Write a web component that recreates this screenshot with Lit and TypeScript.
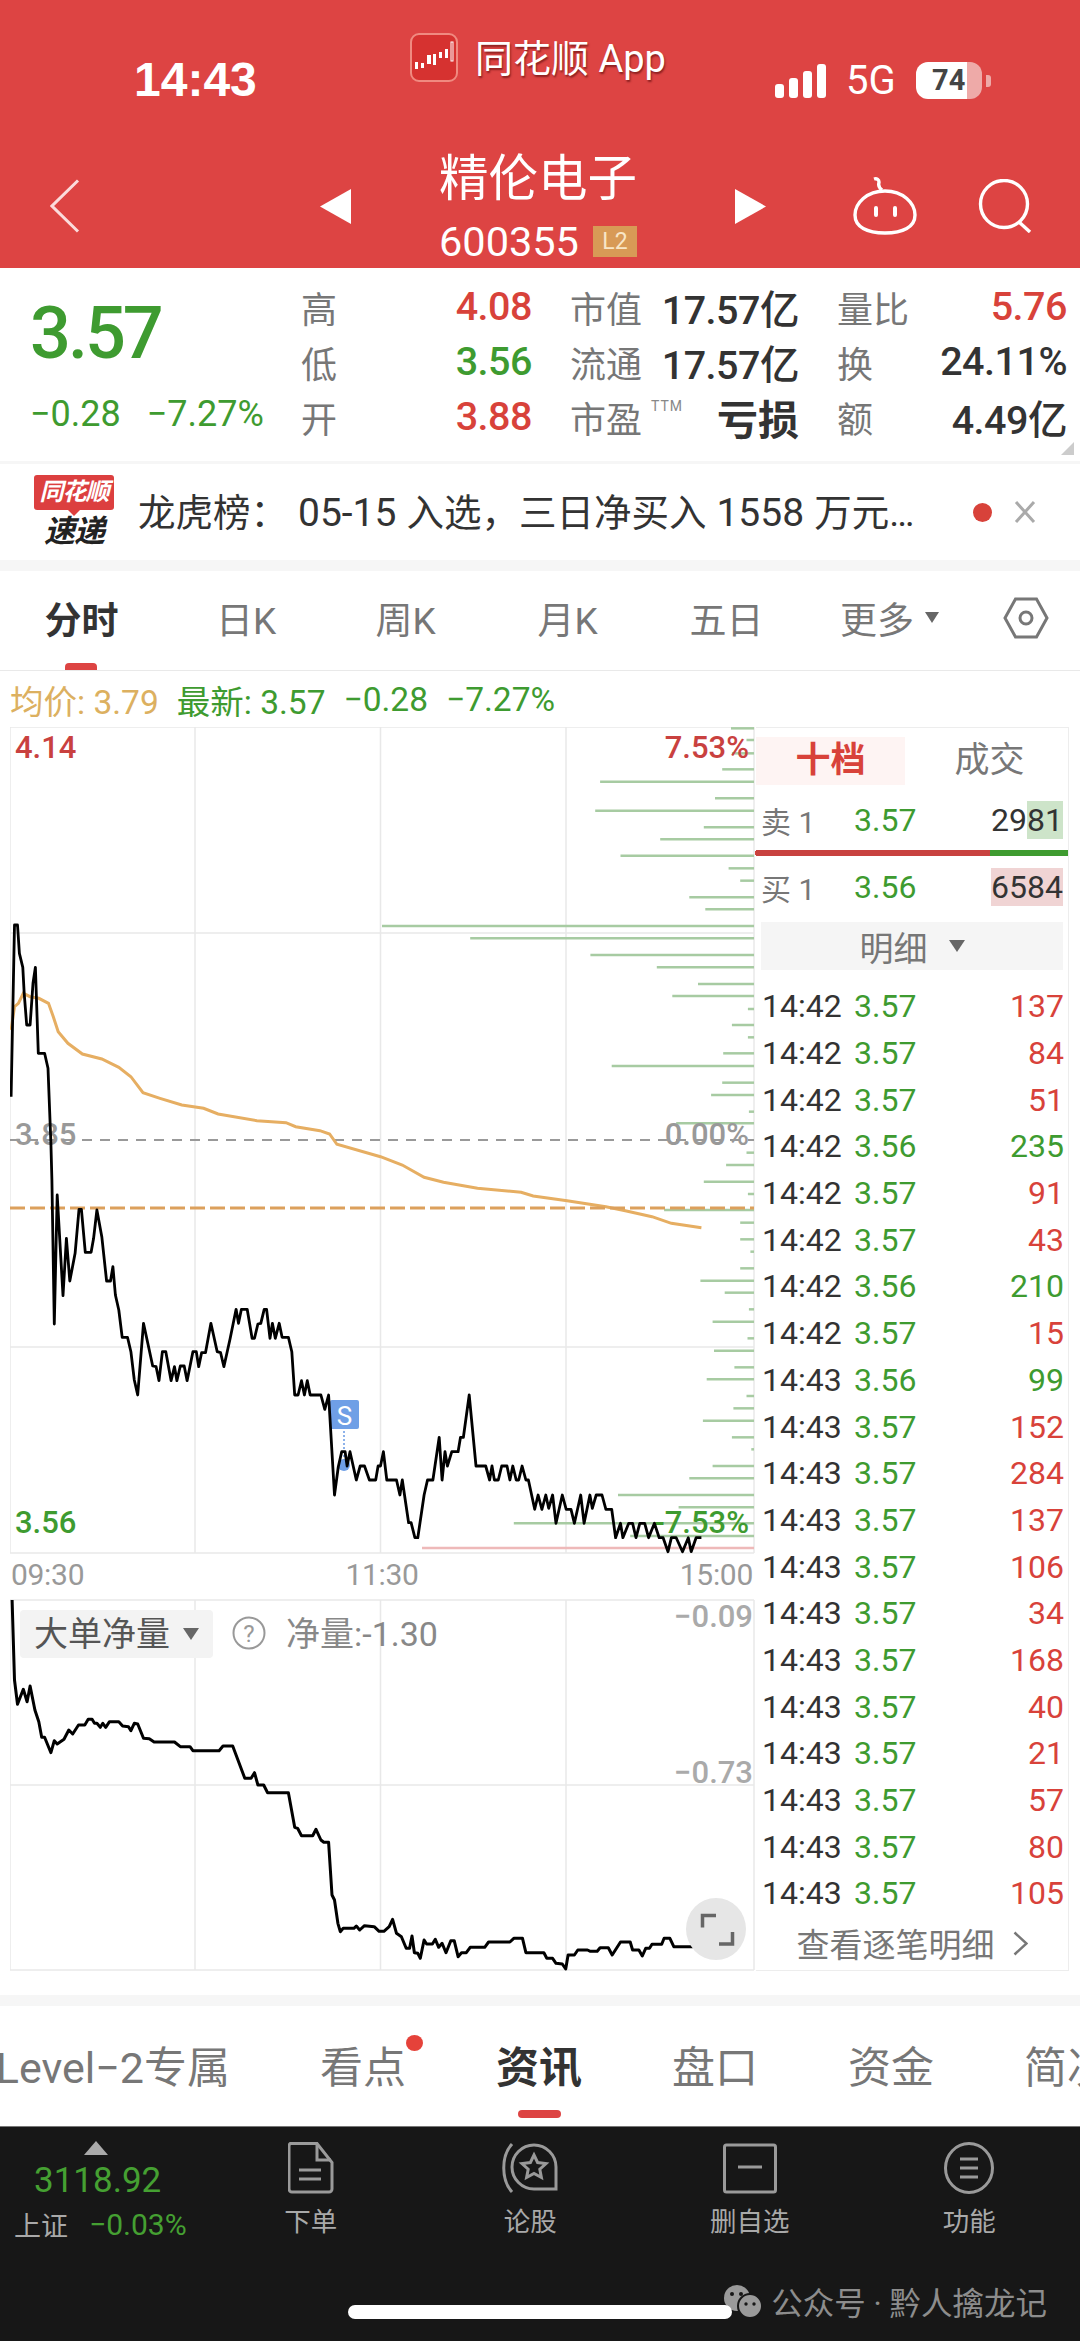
import { LitElement, html, svg, css } from "lit";
import { customElement } from "lit/decorators.js";

// chart traces were read off zoomed crops: x is at 2.063x, y at 3x from a base line
type Pt = [number, number];
const trace = (pts: Pt[], y0: number) =>
  pts.map(([x, y]) => `${(x / 2.063).toFixed(1)},${(y0 + y / 3).toFixed(1)}`).join(" ");

const priceHead: Pt[] = [
  [23, 1160], [30, 645], [36, 645], [40, 730], [47, 772], [50, 850], [55, 945], [62, 945], [68, 820], [73, 772],
  [79, 1030], [92, 1030], [99, 1075], [105, 1300], [107, 1410],
];
const priceTail: Pt[] = [
  [112, 432], [118, 45], [130, 347], [137, 175], [144, 303], [155, 220], [163, 88], [168, 88], [176, 217], [188, 217],
  [193, 175], [200, 90], [210, 170], [220, 303], [228, 303], [233, 260], [238, 345], [245, 390], [252, 472], [263, 472],
  [270, 515], [277, 600], [284, 645], [296, 430], [305, 490], [315, 558], [322, 560], [328, 602], [335, 515], [342, 515],
  [353, 602], [360, 560], [365, 602], [372, 558], [380, 558], [386, 602], [398, 515], [405, 515], [410, 560], [416, 518],
  [424, 518], [435, 430], [448, 515], [455, 518], [462, 560], [475, 475], [487, 388], [492, 430], [498, 388], [510, 388],
  [520, 475], [525, 475], [532, 432], [538, 430], [545, 388], [550, 388], [557, 475], [562, 430], [568, 475], [576, 430],
  [582, 472], [595, 472], [602, 515], [608, 645], [615, 645], [622, 602], [628, 645], [634, 602], [640, 645], [662, 645],
  [670, 688], [678, 645], [690, 945], [698, 860], [705, 815], [712, 815], [716, 858], [722, 815], [735, 900], [743, 858],
  [752, 858], [762, 900], [775, 900], [780, 858], [785, 858], [791, 815], [798, 900], [818, 900], [825, 945], [830, 900],
  [843, 1028], [848, 1028], [856, 1073], [862, 1073], [875, 945], [882, 900], [893, 900], [906, 772], [912, 900], [918, 815],
  [923, 858], [932, 815], [945, 815], [950, 772], [956, 772], [968, 645], [982, 858], [1002, 858], [1010, 900], [1015, 858],
  [1020, 900], [1028, 900], [1035, 858], [1046, 858], [1052, 900], [1058, 858], [1065, 900], [1070, 900], [1077, 858], [1085, 900],
  [1090, 900], [1103, 988], [1110, 945], [1118, 988], [1126, 945], [1132, 985], [1140, 945], [1147, 1030], [1160, 945], [1168, 988],
  [1178, 988], [1185, 1030], [1198, 945], [1205, 1030], [1217, 945], [1222, 985], [1230, 945], [1242, 945], [1250, 988], [1262, 988],
  [1270, 1073], [1280, 1030], [1285, 1073], [1297, 1030], [1305, 1030], [1312, 1073], [1320, 1030], [1330, 1030], [1338, 1073], [1350, 1030],
  [1360, 1073], [1368, 1073], [1378, 1115], [1385, 1073], [1395, 1073], [1408, 1115], [1420, 1073], [1426, 1115], [1436, 1073], [1447, 1073],
];
const avgLine: Pt[] = [
  [23, 960], [30, 890], [38, 880], [48, 850], [62, 860], [80, 865], [100, 880], [110, 920], [120, 965], [140, 1000],
  [170, 1032], [210, 1047], [245, 1072], [270, 1100], [295, 1148], [330, 1165], [375, 1185], [420, 1195], [450, 1212], [530, 1232],
  [590, 1238], [610, 1250], [660, 1262], [680, 1272], [695, 1303], [785, 1340], [830, 1365], [875, 1402], [915, 1417], [985, 1435],
  [1075, 1447], [1100, 1458], [1170, 1472], [1250, 1490], [1290, 1502], [1345, 1520], [1385, 1540], [1447, 1553],
];
const flowLine: Pt[] = [
  [25, 30], [30, 270], [36, 343], [48, 298], [56, 335], [62, 288], [72, 360], [80, 395], [86, 442], [92, 442],
  [105, 488], [112, 452], [118, 462], [132, 448], [142, 420], [150, 432], [162, 405], [175, 405], [182, 388], [190, 388],
  [195, 400], [200, 400], [207, 412], [212, 400], [218, 412], [226, 395], [245, 395], [253, 408], [265, 410], [270, 422],
  [277, 400], [284, 402], [296, 445], [308, 446], [318, 456], [360, 456], [372, 470], [392, 470], [398, 482], [452, 482],
  [460, 468], [480, 468], [505, 565], [518, 565], [525, 548], [532, 585], [544, 585], [552, 608], [595, 608], [608, 712],
  [614, 715], [622, 737], [645, 737], [652, 718], [662, 750], [668, 757], [678, 757], [685, 915], [690, 930], [697, 1000],
  [702, 1025], [708, 1015], [730, 1015], [735, 1008], [742, 1020], [752, 1007], [772, 1010], [782, 1024], [792, 1024], [803, 1010],
  [810, 988], [818, 1030], [828, 1040], [838, 1075], [845, 1075], [850, 1038], [855, 1088], [862, 1090], [867, 1105], [875, 1050],
  [880, 1062], [892, 1062], [898, 1048], [905, 1072], [912, 1060], [920, 1088], [930, 1052], [937, 1052], [945, 1100], [952, 1088],
  [962, 1088], [970, 1072], [1000, 1072], [1008, 1056], [1052, 1056], [1060, 1045], [1078, 1045], [1085, 1088], [1122, 1088], [1128, 1105],
  [1140, 1105], [1147, 1120], [1160, 1122], [1167, 1137], [1172, 1095], [1185, 1095], [1192, 1080], [1212, 1080], [1218, 1084], [1232, 1084],
  [1238, 1073], [1255, 1073], [1263, 1095], [1280, 1056], [1300, 1056], [1305, 1080], [1318, 1080], [1325, 1098], [1332, 1075], [1340, 1075],
  [1345, 1063], [1365, 1063], [1370, 1045], [1382, 1045], [1390, 1070], [1428, 1070], [1438, 1060],
];
// [y, left x] of each volume-by-price bar, same trace units
const volBars: Pt[] = [
  [55, 1508], [90, 1540], [130, 1510], [178, 1490], [215, 1238], [265, 1475], [302, 1228], [352, 1452], [388, 1362], [437, 1280],
  [475, 1503], [512, 1527], [562, 1422], [598, 1455], [648, 788], [685, 970], [735, 1218], [772, 1355], [822, 1440], [858, 1387],
  [897, 1543], [945, 1510], [982, 1543], [1030, 1492], [1068, 1262], [1118, 1490], [1155, 1467], [1205, 1545], [1240, 1395], [1328, 1540],
  [1365, 1498], [1415, 1452], [1452, 1543], [1500, 1370], [1538, 1527], [1588, 1527], [1625, 1548], [1675, 1527], [1712, 1445], [1748, 1495],
  [1798, 1545], [1835, 1470], [1885, 1542], [1922, 1473], [1972, 1515], [2008, 1458], [2058, 1540], [2095, 1513], [2132, 1450], [2182, 1510],
  [2218, 1550], [2268, 1470], [2305, 1422], [2355, 1275], [2392, 1400], [2440, 1060], [2478, 1300],
];

const trades: [string, string, string, boolean][] = [
  ["14:42", "3.57", "137", true], ["14:42", "3.57", "84", true], ["14:42", "3.57", "51", true], ["14:42", "3.56", "235", false],
  ["14:42", "3.57", "91", true], ["14:42", "3.57", "43", true], ["14:42", "3.56", "210", false], ["14:42", "3.57", "15", true],
  ["14:43", "3.56", "99", false], ["14:43", "3.57", "152", true], ["14:43", "3.57", "284", true], ["14:43", "3.57", "137", true],
  ["14:43", "3.57", "106", true], ["14:43", "3.57", "34", true], ["14:43", "3.57", "168", true], ["14:43", "3.57", "40", true],
  ["14:43", "3.57", "21", true], ["14:43", "3.57", "57", true], ["14:43", "3.57", "80", true], ["14:43", "3.57", "105", true],
];

@customElement("app-root")
export class AppRoot extends LitElement {
  static styles = css`
    :host {
      display: block;
      width: 1080px;
      height: 2341px;
      overflow: hidden;
      background: #fff;
      color: #333;
      font-family: Roboto, "Noto Sans CJK SC", sans-serif;
    }
    svg { display: block; }

    /* red header */
    .header { height: 268px; background: #dd4443; color: #fff; }
    .status { display: grid; grid-template-columns: 410px 365px 305px; height: 112px; }
    .time { padding: 56px 0 0 134px; font: 700 48px/48px "Liberation Sans", sans-serif; }
    .app { display: flex; align-items: center; gap: 17px; margin-top: 33px; height: 49px; }
    .app-name { margin-top: -4px; font-size: 38px; text-shadow: 1px 2px 2px rgba(70, 0, 0, 0.55); }
    .sys { display: flex; align-items: center; height: 37px; margin-top: 62px; }
    .net { margin: 0 20px 0 20px; font-size: 40px; }
    .battery {
      width: 66px;
      height: 37px;
      border-radius: 12px;
      background: linear-gradient(90deg, #fff 77%, #eeaaa8 77%);
      color: #444;
      font-size: 29px;
      font-weight: 700;
      line-height: 37px;
      text-align: center;
    }
    .nub { width: 5px; height: 12px; margin-left: 4px; border-radius: 0 3px 3px 0; background: #eeaaa8; }
    .nav { display: grid; grid-template-columns: 320px 446px 1fr; align-items: center; height: 124px; padding-top: 32px; }
    .back { margin-left: 50px; }
    .switch { display: flex; align-items: center; justify-content: space-between; }
    .title { display: flex; flex-direction: column; padding-right: 10px; }
    .name { font-size: 49.5px; line-height: 48px; text-align: center; }
    .code-row { display: flex; align-items: center; gap: 14px; margin-top: 23px; height: 31px; font-size: 41.5px; }
    .l2 { width: 44px; height: 31px; background: #d89a56; color: #f8e6c6; font-size: 23px; line-height: 31px; text-align: center; }
    .actions { display: flex; align-items: center; gap: 61px; padding-left: 87px; }

    /* quote */
    .quote { display: flex; height: 193px; position: relative; }
    .last { width: 301px; padding-left: 30px; box-sizing: border-box; }
    .last-price { margin-top: 27px; font-size: 72px; font-weight: 500; line-height: 78px; letter-spacing: -3px; }
    .last-chg { display: flex; gap: 26px; margin-top: 21px; font-size: 36px; line-height: 40px; }
    .stats { display: grid; grid-template-columns: 231px 229px 230px; grid-auto-rows: 55px; column-gap: 38px; padding-top: 11px; }
    .stat { display: flex; align-items: center; justify-content: space-between; }
    .stat-label { color: #777; font-size: 36px; }
    .stat-value { font-size: 39.5px; font-weight: 500; letter-spacing: -0.5px; }
    .ttm { align-self: flex-start; margin: 9px auto 0 9px; color: #888; font-size: 14px; letter-spacing: 1px; }
    .loss { font-size: 41px; font-weight: 700; }
    .up { color: #d8423a; }
    .down { color: #3e9b30; }
    .corner { position: absolute; right: 6px; bottom: 6px; width: 0; height: 0; border-left: 13px solid transparent; border-bottom: 13px solid #ccc; }

    .band { height: 11px; background: #f6f6f6; }
    .band.thin { height: 3px; }
    .spacer { height: 24px; }

    /* ticker */
    .ticker { display: flex; align-items: center; height: 96px; padding-left: 34px; position: relative; }
    .logo { display: flex; flex-direction: column; align-items: center; width: 80px; margin-right: 24px; }
    .logo-top {
      width: 80px;
      height: 35px;
      border-radius: 3px;
      background: #dc3f3f;
      color: #fff;
      font-size: 24px;
      font-weight: 700;
      font-style: italic;
      line-height: 35px;
      text-align: center;
      letter-spacing: -1px;
    }
    .logo-tail { width: 0; height: 0; border: 6px solid transparent; border-top-color: #dc3f3f; border-bottom: 0; }
    .logo-bottom { margin-top: -1px; color: #222; font-size: 31px; font-weight: 700; font-style: italic; line-height: 34px; letter-spacing: -1px; }
    .ticker-text { width: 800px; margin-top: -6px; font-size: 37.5px; white-space: nowrap; color: #333; }
    .ticker-text .num { margin: 0 10px; font-size: 39px; }
    .dot { width: 19px; height: 19px; margin-left: 35px; border-radius: 50%; background: #d8423a; }
    .close { margin-left: 22px; }

    /* period tabs */
    .periods { display: grid; grid-template-columns: 163px 166px 153px 171px 147px 179px 93px; height: 99px; border-bottom: 1px solid #e9e9e9; position: relative; }
    .period { display: flex; align-items: center; justify-content: center; gap: 11px; padding-bottom: 6px; color: #777; font-size: 37px; }
    .period.on { color: #333; font-weight: 700; }
    .caret { width: 0; height: 0; border: 7.5px solid transparent; border-top: 11px solid #666; border-bottom: 0; }
    .period-mark { position: absolute; left: 65px; bottom: 0; width: 32px; height: 7px; border-radius: 4px 4px 0 0; background: #dd4443; }
    .legend { display: flex; gap: 18px; align-items: center; height: 56px; padding-left: 10px; font-size: 33.5px; }
    .legend .avg { color: #dcb060; }

    /* chart + book */
    .board { display: flex; height: 1244px; padding-left: 10px; }
    .charts { width: 746px; }
    .axis { display: flex; justify-content: space-between; align-items: center; height: 45px; padding: 0 3px 4px 1px; box-sizing: border-box; color: #999; font-size: 30px; letter-spacing: -0.3px; }
    .grid { stroke: #e8e8e8; stroke-width: 1.5; }
    .vol { stroke: #a7cba2; stroke-width: 2.5; }
    .lbl { font-size: 31px; font-weight: 500; }
    .sub-lbl { font-size: 34px; }
    .book { width: 313px; border: solid #ededed; border-width: 1.5px 1.5px 1.5px 0; box-sizing: border-box; display: flex; flex-direction: column; }
    .book-tabs { display: grid; grid-template-columns: 149px 1fr; height: 48px; margin-top: 9px; flex: none; font-size: 35px; text-align: center; line-height: 48px; }
    .book-tab { color: #777; padding-left: 6px; }
    .book-tab.on { background: #fef4f3; color: #d8423a; font-weight: 700; padding-left: 0; }
    .level { display: grid; grid-template-columns: 93px 1fr auto; align-items: center; padding: 0 5px; height: 65px; flex: none; font-size: 32px; }
    .level.sell { padding-top: 5px; box-sizing: border-box; }
    .level.buy { height: 66px; padding-bottom: 4px; box-sizing: border-box; }
    .level-name { color: #777; font-size: 30px; }
    .hl-g { background: #cde4c9; }
    .hl-r { background: #f0d4d4; }
    .book-bar { display: flex; height: 6px; flex: none; }
    .book-bar .ask { width: 234px; background: #c8423f; }
    .book-bar .bid { flex: 1; background: #3e9b30; }
    .detail { display: flex; align-items: center; justify-content: center; gap: 21px; height: 48px; margin: 0 5px; flex: none; background: #f5f5f5; color: #777; font-size: 34px; }
    .detail .caret { border-width: 12px 8.5px 0; border-top-color: #666; }
    .trades { margin-top: 13px; flex: none; }
    .trade { display: grid; grid-template-columns: 92px 1fr auto; align-items: center; height: 46.7px; padding: 0 4px 0 6px; font-size: 32px; }
    .more { display: flex; flex: 1; align-items: center; justify-content: center; gap: 18px; color: #777; font-size: 33px; }

    /* lower tabs */
    .sections { display: flex; gap: 90px; height: 120px; overflow: hidden; position: relative; color: #777; font-size: 43px; box-sizing: border-box; }
    .section { display: flex; flex: none; justify-content: flex-end; padding-top: 37px; line-height: 50px; white-space: nowrap; }
    .section.lead { width: 230px; }
    .section.on { color: #333; font-weight: 700; }
    .section-mark { position: absolute; left: 518px; bottom: 8px; width: 43px; height: 8px; border-radius: 4px; background: #dd4443; }
    .badge { position: absolute; left: 406px; top: 29px; width: 17px; height: 16px; border-radius: 50%; background: #e5423a; }

    /* dock */
    .dock { display: grid; grid-template-columns: 201px repeat(4, 219.5px); height: 215px; border-top: 1px solid #777; box-sizing: border-box; background: #171717; color: #a9a9a9; position: relative; }
    .index { position: relative; padding: 34px 0 0 14px; }
    .index-mark { position: absolute; left: 84px; top: 14px; width: 0; height: 0; border: 12.5px solid transparent; border-top: 0; border-bottom: 14px solid #aaa; }
    .index-value { margin-left: 20px; color: #45a032; font-size: 35px; line-height: 40px; }
    .index-row { display: flex; align-items: center; gap: 21px; margin-top: 4px; font-size: 27px; }
    .index-row .pct { color: #45a032; font-size: 30px; }
    .dock-item { display: flex; flex-direction: column; align-items: center; padding-top: 15px; }
    .dock-label { margin-top: 14px; font-size: 26.5px; line-height: 28px; }
    .mark { position: absolute; right: 33px; top: 151px; display: flex; align-items: center; gap: 9px; color: #8d8d8d; font-size: 31.5px; }
    .home { position: absolute; left: 348px; top: 178px; width: 384px; height: 14px; border-radius: 7px; background: #fff; }
  `;

  private renderMainChart() {
    const rows = [727, 933, 1347, 1553];
    const cols = [10, 195, 380.5, 566, 754];
    return html`<svg width="746" height="827" viewBox="10 727 746 827">
      ${rows.map((y) => svg`<line class="grid" x1="10" x2="754" y1=${y} y2=${y}></line>`)}
      ${cols.map((x) => svg`<line class="grid" x1=${x} x2=${x} y1="727" y2="1553"></line>`)}
      ${volBars.map(([y, x]) => svg`<line class="vol" x1=${(x / 2.063).toFixed(1)} x2="754" y1=${710 + y / 3} y2=${710 + y / 3}></line>`)}
      <line x1="422" x2="754" y1="1548" y2="1548" stroke="#eeb9b9" stroke-width="2.5"></line>
      <rect x="755" y="851" width="1" height="4" fill="#d8423a"></rect>
      <text class="lbl" x="15" y="758" fill="#c9413f">4.14</text>
      <text class="lbl" x="749" y="758" fill="#c9413f" text-anchor="end">7.53%</text>
      <text class="lbl" x="15" y="1145" fill="#999">3.85</text>
      <text class="lbl" x="749" y="1145" fill="#999" text-anchor="end">0.00%</text>
      <text class="lbl" x="15" y="1533" fill="#3e9b30">3.56</text>
      <text class="lbl" x="749" y="1533" fill="#3e9b30" text-anchor="end">-7.53%</text>
      <line x1="10" x2="754" y1="1140" y2="1140" stroke="#999" stroke-width="1.8" stroke-dasharray="10 8"></line>
      <polyline points=${trace(avgLine, 710)} fill="none" stroke="#e6ae62" stroke-width="3"></polyline>
      <line x1="10" x2="754" y1="1208" y2="1208" stroke="#dca05c" stroke-width="3" stroke-dasharray="15 5"></line>
      <rect x="330" y="1400" width="29" height="29" rx="2" fill="#6f9fe6"></rect>
      <text x="344.5" y="1425" fill="#fff" font-size="26" text-anchor="middle">S</text>
      <line x1="344" x2="344" y1="1431" y2="1462" stroke="#8db2ea" stroke-width="2" stroke-dasharray="2 2"></line>
      <circle cx="344" cy="1465" r="6" fill="#6f9fe6"></circle>
      <polyline points="${trace(priceHead, 710)} ${trace(priceTail, 1180)}" fill="none" stroke="#000" stroke-width="2.8" stroke-linejoin="round"></polyline>
    </svg>`;
  }

  private renderFlowChart() {
    return html`<svg width="746" height="372" viewBox="10 1599 746 372">
      <line class="grid" x1="10" x2="754" y1="1600" y2="1600"></line>
      <line class="grid" x1="10" x2="754" y1="1785" y2="1785"></line>
      <line class="grid" x1="10" x2="754" y1="1970" y2="1970"></line>
      ${[10, 195, 380.5, 566, 754].map((x) => svg`<line class="grid" x1=${x} x2=${x} y1="1600" y2="1970"></line>`)}
      <rect x="20" y="1610" width="193" height="48" rx="4" fill="#f3f3f3"></rect>
      <text class="sub-lbl" x="34" y="1646" fill="#555">大单净量</text>
      <polygon points="183,1628 199,1628 191,1640" fill="#666"></polygon>
      <circle cx="249" cy="1633" r="15.5" fill="none" stroke="#999" stroke-width="2"></circle>
      <text x="249" y="1642" fill="#999" font-size="24" text-anchor="middle">?</text>
      <text class="sub-lbl" x="286" y="1646" fill="#888">净量:-1.30</text>
      <text class="lbl" x="753" y="1627" fill="#aaa" text-anchor="end">−0.09</text>
      <text class="lbl" x="753" y="1783" fill="#aaa" text-anchor="end">−0.73</text>
      <polyline points=${trace(flowLine, 1590)} fill="none" stroke="#000" stroke-width="3" stroke-linejoin="round"></polyline>
      <ellipse cx="716" cy="1929" rx="30" ry="31" fill="#e6e6e6"></ellipse>
      <path d="M716 1915.5h-13.5v12M719 1944h13.5v-12" fill="none" stroke="#666" stroke-width="3.5"></path>
    </svg>`;
  }

  private renderHeader() {
    return html`<div class="header">
      <div class="status">
        <div class="time">14:43</div>
        <div class="app">
          <svg width="48" height="49" viewBox="0 0 48 49">
            <rect x="1" y="1" width="46" height="47" rx="8" fill="#d63230" stroke="#f08a80" stroke-width="2"></rect>
            <g fill="#fff">
              <rect x="5" y="29" width="3" height="7"></rect>
              <rect x="11" y="30" width="3" height="5"></rect>
              <rect x="17" y="22" width="4" height="9"></rect>
              <rect x="23" y="21" width="3" height="11"></rect>
              <rect x="29" y="19" width="3" height="6"></rect>
              <rect x="35" y="16" width="3" height="9"></rect>
            </g>
            <rect x="41" y="9" width="2" height="19" fill="none" stroke="#fff" stroke-width="1"></rect>
          </svg>
          <span class="app-name">同花顺 App</span>
        </div>
        <div class="sys">
          <svg width="51" height="34" viewBox="0 0 51 34" fill="#fff">
            <rect x="0" y="20" width="9" height="14" rx="3"></rect>
            <rect x="14" y="14" width="9" height="20" rx="3"></rect>
            <rect x="28" y="7" width="9" height="27" rx="3"></rect>
            <rect x="42" y="0" width="9" height="34" rx="3"></rect>
          </svg>
          <span class="net">5G</span>
          <div class="battery">74</div>
          <div class="nub"></div>
        </div>
      </div>
      <div class="nav">
        <svg class="back" width="30" height="54" viewBox="0 0 30 54">
          <path d="M28 1.5 2 27l26 25.5" fill="none" stroke="#fbdcdc" stroke-width="3"></path>
        </svg>
        <div class="switch">
          <svg width="31" height="35" viewBox="0 0 31 35"><polygon points="31,0 31,35 0,17.5" fill="#fff"></polygon></svg>
          <div class="title">
            <div class="name">精伦电子</div>
            <div class="code-row"><span>600355</span><span class="l2">L2</span></div>
          </div>
          <svg width="31" height="35" viewBox="0 0 31 35"><polygon points="0,0 0,35 31,17.5" fill="#fff"></polygon></svg>
        </div>
        <div class="actions">
          <svg width="64" height="58" viewBox="0 0 64 58" fill="none" stroke="#fff" stroke-width="3.4">
            <path d="M21 2c3-1 5 1 5 3s-2 4 3 8"></path>
            <path d="M32 14c18 0 30 12 30 24 0 12-12 18-30 18S2 50 2 38c0-12 12-24 30-24z"></path>
            <rect x="21" y="29" width="4" height="11" rx="2" fill="#fff" stroke="none"></rect>
            <rect x="40" y="29" width="4" height="11" rx="2" fill="#fff" stroke="none"></rect>
          </svg>
          <svg width="54" height="54" viewBox="0 0 54 54" fill="none" stroke="#fff" stroke-width="3.4">
            <circle cx="26" cy="25" r="23.5"></circle>
            <path d="M41 43 52 53"></path>
          </svg>
        </div>
      </div>
    </div>`;
  }

  private renderQuote() {
    return html`<div class="quote">
      <div class="last down">
        <div class="last-price">3.57</div>
        <div class="last-chg"><span>−0.28</span><span>−7.27%</span></div>
      </div>
      <div class="stats">
        <div class="stat"><span class="stat-label">高</span><span class="stat-value up">4.08</span></div>
        <div class="stat"><span class="stat-label">市值</span><span class="stat-value">17.57亿</span></div>
        <div class="stat"><span class="stat-label">量比</span><span class="stat-value up">5.76</span></div>
        <div class="stat"><span class="stat-label">低</span><span class="stat-value down">3.56</span></div>
        <div class="stat"><span class="stat-label">流通</span><span class="stat-value">17.57亿</span></div>
        <div class="stat"><span class="stat-label">换</span><span class="stat-value">24.11%</span></div>
        <div class="stat"><span class="stat-label">开</span><span class="stat-value up">3.88</span></div>
        <div class="stat"><span class="stat-label">市盈</span><span class="ttm">TTM</span><span class="loss">亏损</span></div>
        <div class="stat"><span class="stat-label">额</span><span class="stat-value">4.49亿</span></div>
      </div>
      <div class="corner"></div>
    </div>`;
  }

  private renderBook() {
    return html`<div class="book">
      <div class="book-tabs"><div class="book-tab on">十档</div><div class="book-tab">成交</div></div>
      <div class="level sell">
        <span class="level-name">卖 1</span><span class="down">3.57</span><span>29<span class="hl-g">81</span></span>
      </div>
      <div class="book-bar"><div class="ask"></div><div class="bid"></div></div>
      <div class="level buy">
        <span class="level-name">买 1</span><span class="down">3.56</span><span class="hl-r">6584</span>
      </div>
      <div class="detail"><span>明细</span><span class="caret"></span></div>
      <div class="trades">
        ${trades.map(
          ([t, p, v, up]) => html`<div class="trade">
            <span>${t}</span><span class="down">${p}</span><span class=${up ? "up" : "down"}>${v}</span>
          </div>`
        )}
      </div>
      <div class="more">
        <span>查看逐笔明细</span>
        <svg width="15" height="25" viewBox="0 0 15 25"><path d="M1.5 1.5 13.5 12.5 1.5 23.5" fill="none" stroke="#777" stroke-width="2.5"></path></svg>
      </div>
    </div>`;
  }

  private renderDock() {
    return html`<div class="dock">
      <div class="index">
        <div class="index-mark"></div>
        <div class="index-value">3118.92</div>
        <div class="index-row"><span>上证</span><span class="pct">−0.03%</span></div>
      </div>
      <div class="dock-item">
        <svg width="46" height="52" viewBox="0 0 46 52" fill="none" stroke="#9a9a9a" stroke-width="3">
          <path d="M4 1.5h25l15 19V47a3 3 0 0 1-3 3H4a3 3 0 0 1-3-3V4a3 3 0 0 1 3-3z"></path>
          <path d="M29 2v16h14M11 28h22M11 37h22"></path>
        </svg>
        <span class="dock-label">下单</span>
      </div>
      <div class="dock-item">
        <svg width="56" height="52" viewBox="0 0 56 52" fill="none" stroke="#9a9a9a" stroke-width="3">
          <path d="M10 2C-1 14-1 38 10 50"></path>
          <path d="M32 3a22 22 0 0 1 22 22v22H32a22 22 0 0 1 0-44z"></path>
          <path d="m32 13 3.6 7.5 8.4 1-6.2 5.7 1.6 8.3-7.4-4-7.4 4 1.6-8.3-6.2-5.7 8.4-1z"></path>
        </svg>
        <span class="dock-label">论股</span>
      </div>
      <div class="dock-item">
        <svg width="54" height="52" viewBox="0 0 54 52" fill="none" stroke="#9a9a9a" stroke-width="3">
          <rect x="1.5" y="3" width="51" height="47" rx="2"></rect>
          <path d="M15 25h24"></path>
        </svg>
        <span class="dock-label">删自选</span>
      </div>
      <div class="dock-item">
        <svg width="50" height="52" viewBox="0 0 50 52" fill="none" stroke="#9a9a9a" stroke-width="3">
          <ellipse cx="25" cy="26" rx="23.5" ry="24.5"></ellipse>
          <path d="M16 17h18M16 26h18M16 35h18"></path>
        </svg>
        <span class="dock-label">功能</span>
      </div>
      <div class="mark">
        <svg width="40" height="32" viewBox="0 0 40 32">
          <circle cx="15" cy="13" r="13" fill="#9a9a9a"></circle>
          <circle cx="10" cy="9" r="2" fill="#171717"></circle>
          <circle cx="19" cy="9" r="2" fill="#171717"></circle>
          <circle cx="28" cy="21" r="12" fill="#9a9a9a" stroke="#171717" stroke-width="2"></circle>
          <circle cx="24" cy="19" r="1.7" fill="#171717"></circle>
          <circle cx="32" cy="19" r="1.7" fill="#171717"></circle>
        </svg>
        <span>公众号 · 黔人擒龙记</span>
      </div>
      <div class="home"></div>
    </div>`;
  }

  render() {
    return html`
      ${this.renderHeader()} ${this.renderQuote()}
      <div class="band thin"></div>
      <div class="ticker">
        <div class="logo">
          <div class="logo-top">同花顺</div>
          <div class="logo-tail"></div>
          <div class="logo-bottom">速递</div>
        </div>
        <div class="ticker-text">龙虎榜：<span class="num">05-15</span>入选，三日净买入<span class="num">1558</span>万元…</div>
        <div class="dot"></div>
        <svg class="close" width="22" height="24" viewBox="0 0 22 24"><path d="M2 2l18 20M20 2 2 22" stroke="#aaa" stroke-width="3" fill="none"></path></svg>
      </div>
      <div class="band"></div>
      <div class="periods">
        <div class="period on">分时</div>
        <div class="period">日K</div>
        <div class="period">周K</div>
        <div class="period">月K</div>
        <div class="period">五日</div>
        <div class="period">更多<span class="caret"></span></div>
        <div class="period">
          <svg width="46" height="42" viewBox="0 0 46 42" fill="none" stroke="#777" stroke-width="3">
            <path d="M12.5 2h21L44 21 33.5 40h-21L2 21z"></path>
            <circle cx="23" cy="21" r="6"></circle>
          </svg>
        </div>
        <div class="period-mark"></div>
      </div>
      <div class="legend">
        <span class="avg">均价: 3.79</span>
        <span class="down">最新: 3.57</span>
        <span class="down">−0.28</span>
        <span class="down">−7.27%</span>
      </div>
      <div class="board">
        <div class="charts">
          ${this.renderMainChart()}
          <div class="axis"><span>09:30</span><span>11:30</span><span>15:00</span></div>
          ${this.renderFlowChart()}
        </div>
        ${this.renderBook()}
      </div>
      <div class="spacer"></div>
      <div class="band"></div>
      <div class="sections">
        <div class="section lead">Level−2专属</div>
        <div class="section">看点</div>
        <div class="section on">资讯</div>
        <div class="section">盘口</div>
        <div class="section">资金</div>
        <div class="section">简况</div>
        <div class="badge"></div>
        <div class="section-mark"></div>
      </div>
      ${this.renderDock()}
    `;
  }
}
